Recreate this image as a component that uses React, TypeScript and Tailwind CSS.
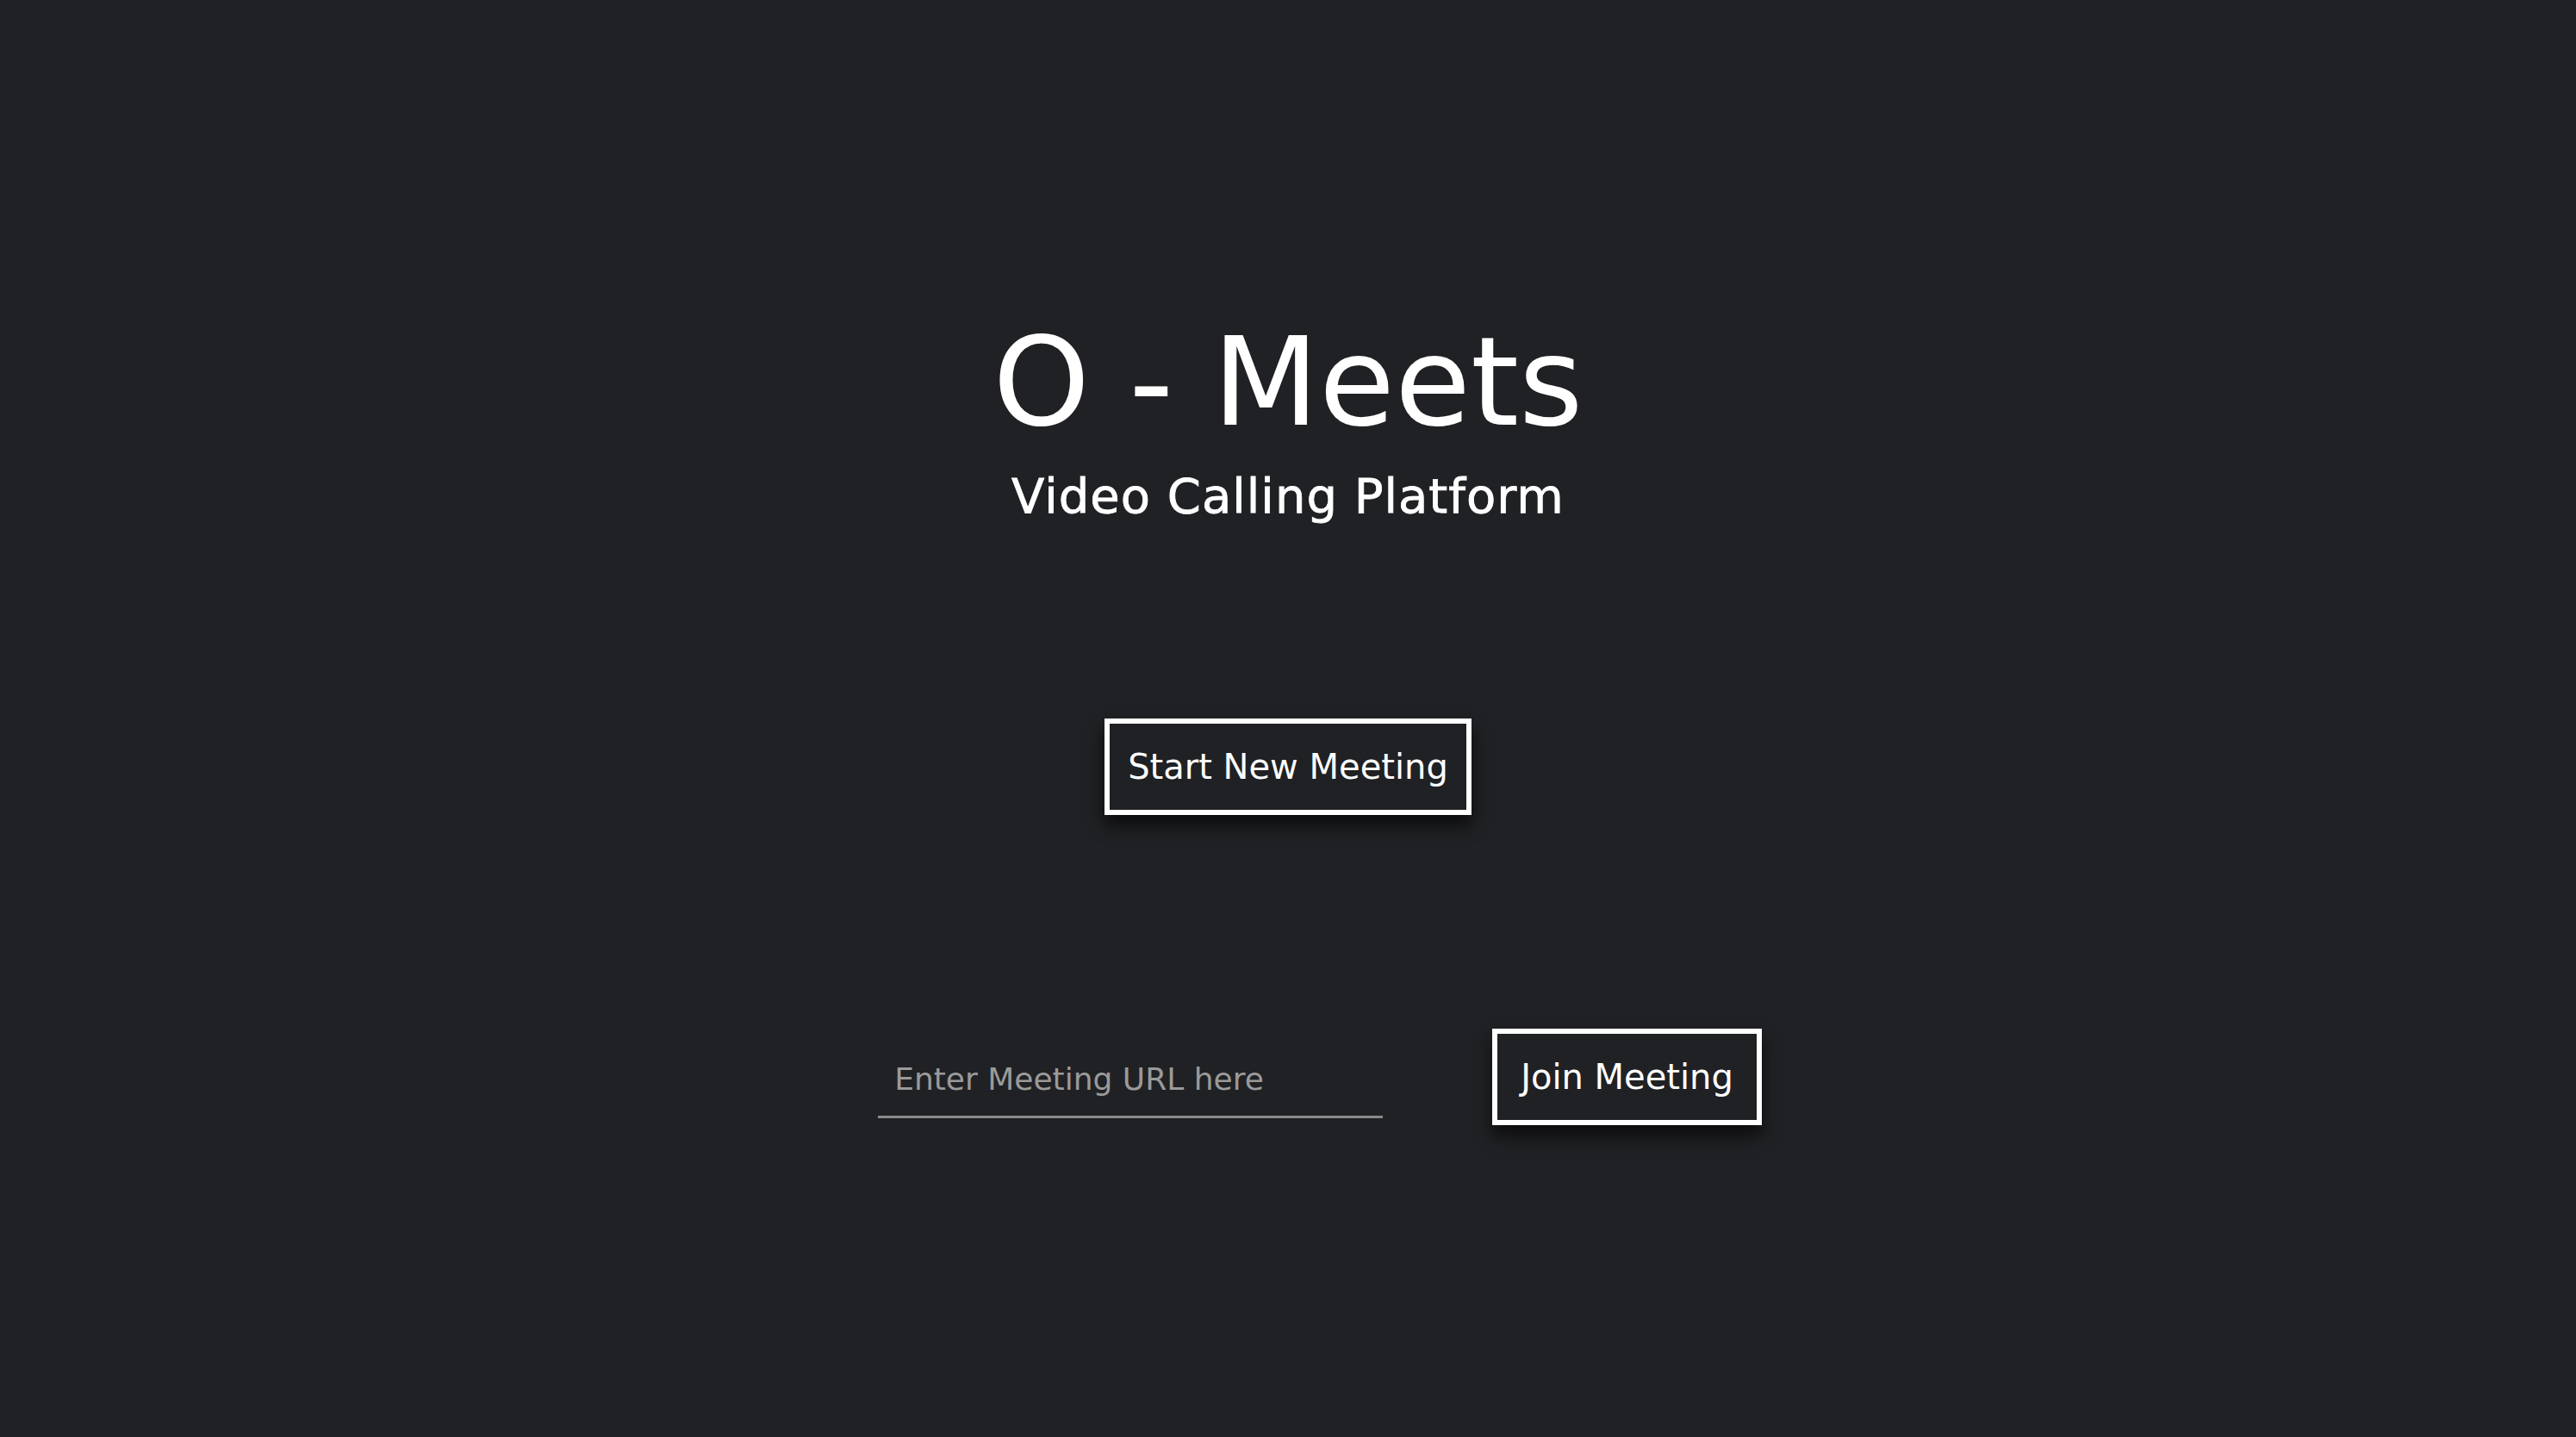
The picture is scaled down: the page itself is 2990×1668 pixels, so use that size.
import React from "react";

export default function App() {
  const [url, setUrl] = React.useState("");

  return (
    <div className="flex h-screen w-full flex-col items-center bg-[#202124] pt-[372px] font-['DejaVu_Sans',sans-serif] text-white">
      <h1 className="text-[143px] font-normal leading-none">O - Meets</h1>
      <h2 className="mt-[33px] text-[56px] font-normal leading-none tracking-[1px] [-webkit-text-stroke:0.8px_white]">
        Video Calling Platform
      </h2>

      <button className="mt-[230px] flex h-[112px] items-center border-[6px] border-white px-[21px] text-[40px] leading-none text-white shadow-[0_12px_18px_rgba(0,0,0,0.65)]">
        Start New Meeting
      </button>

      {/* join row sits a bit right of centre in the original */}
      <div className="mt-[248px] flex items-center gap-[127px] pl-[74px]">
        <input
          value={url}
          onChange={(e) => setUrl(e.target.value)}
          placeholder="Enter Meeting URL here"
          className="h-[96px] w-[586px] border-b-[3px] border-[#8a8a8a] bg-transparent pl-[19px] pt-[8px] text-[36px] leading-none text-white outline-none placeholder:text-[#9a9a9a]"
        />
        <button className="flex h-[112px] items-center border-[6px] border-white px-[27px] text-[40px] leading-none text-white shadow-[0_12px_18px_rgba(0,0,0,0.65)]">
          Join Meeting
        </button>
      </div>
    </div>
  );
}
